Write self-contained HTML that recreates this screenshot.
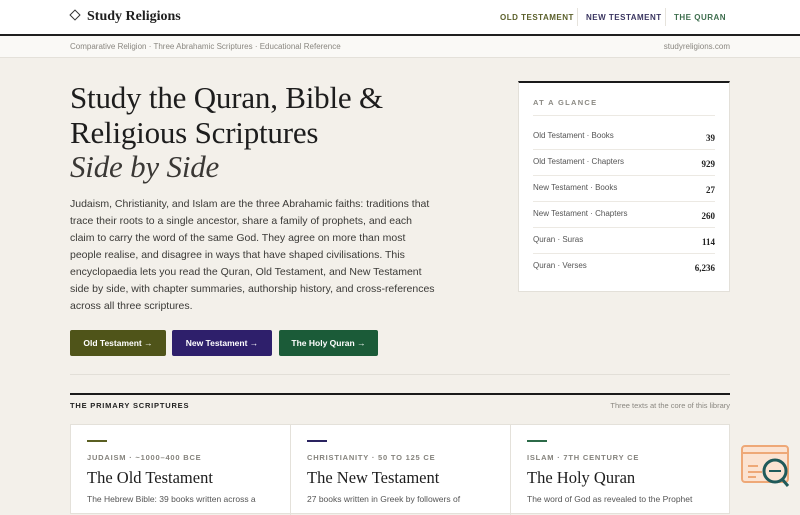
<!DOCTYPE html>
<html><head><meta charset="utf-8"><style>
*{margin:0;padding:0;box-sizing:border-box}
body{width:800px;height:500px;overflow:hidden;background:#f3f0ea;font-family:"Liberation Sans",sans-serif;color:#222;position:relative}
.hdr{position:absolute;left:0;top:0;width:800px;height:36px;background:#fff;border-bottom:2px solid #1f1f1f}
.logo{position:absolute;left:70px;top:9px;font-family:"Liberation Serif",serif;font-weight:bold;font-size:14px;color:#1f1f1f}
.logo .d{display:inline-block;width:8px;height:8px;border:1.3px solid #333;transform:rotate(45deg);margin:0 8px 1px 1px}
.nav{position:absolute;top:13px;font-size:8px;font-weight:bold;letter-spacing:.5px}
.sep{position:absolute;top:8px;width:1px;height:18px;background:#e6e3dc}
.sub{position:absolute;left:0;top:36px;width:800px;height:22px;background:#faf9f6;border-bottom:1px solid #e4e1da;font-size:8px;color:#8a8780}
h1{position:absolute;left:70px;top:81px;font-family:"Liberation Serif",serif;font-weight:normal;font-size:31px;line-height:34.5px;color:#1d1d1d;letter-spacing:-.2px}
h1 i{color:#3a3835}
p.lead{position:absolute;left:70px;top:196px;white-space:nowrap;font-size:10.5px;line-height:17px;color:#3b3a37;letter-spacing:0}
.btn{position:absolute;top:330px;height:26px;border-radius:2px;color:#fff;font-size:8.5px;font-weight:bold;text-align:center;line-height:26px}
.glance{position:absolute;left:518px;top:81px;width:212px;height:211px;background:#fff;border:1px solid #e3e0d9;border-top:2px solid #1a1a1a}
.glance .t{position:absolute;left:14px;top:15px;font-size:7.5px;letter-spacing:1.3px;font-weight:bold;color:#8b8983}
.glance .hl{position:absolute;left:14px;right:14px;top:32px;border-top:1px solid #ece9e3}
.row{position:absolute;left:14px;right:14px;height:26px;border-bottom:1px solid #ece9e3;font-size:8px;color:#555}
.row b{position:absolute;right:0;top:9px;font-family:"Liberation Serif",serif;font-size:9px;color:#222}
.row span{position:absolute;left:0;top:7px}
.hr{position:absolute;left:70px;width:660px}
.cards{position:absolute;left:70px;top:424px;width:660px;height:90px;background:#fff;border:1px solid #e4e1da}
.c{position:absolute;top:0;width:220px;height:90px;border-right:1px solid #e4e1da}
.c .bar{position:absolute;left:16px;top:15px;width:20px;height:2px}
.c .k{position:absolute;left:16px;top:28px;font-size:7.5px;letter-spacing:.8px;color:#85837d;font-weight:bold}
.c .n{position:absolute;left:16px;top:43px;font-family:"Liberation Serif",serif;font-size:16.5px;color:#1d1d1d}
.c .x{position:absolute;left:16px;top:69px;font-size:8.5px;color:#555;white-space:nowrap}
</style></head><body>
<div class="hdr">
<div class="logo"><span class="d"></span>Study Religions</div>
<div class="nav" style="left:500px;color:#5a5f2a">OLD TESTAMENT</div>
<div class="sep" style="left:577px"></div>
<div class="nav" style="left:586px;color:#3a3560">NEW TESTAMENT</div>
<div class="sep" style="left:665px"></div>
<div class="nav" style="left:674px;color:#3e6e4e">THE QURAN</div>
</div>
<div class="sub"><span style="position:absolute;left:70px;top:6px">Comparative Religion · Three Abrahamic Scriptures · Educational Reference</span><span style="position:absolute;right:70px;top:6px">studyreligions.com</span></div>
<h1>Study the Quran, Bible &amp;<br>Religious Scriptures<br><i>Side by Side</i></h1>
<p class="lead">Judaism, Christianity, and Islam are the three Abrahamic faiths: traditions that<br>trace their roots to a single ancestor, share a family of prophets, and each<br>claim to carry the word of the same God. They agree on more than most<br>people realise, and disagree in ways that have shaped civilisations. This<br>encyclopaedia lets you read the Quran, Old Testament, and New Testament<br>side by side, with chapter summaries, authorship history, and cross-references<br>across all three scriptures.</p>
<div class="btn" style="left:70px;width:96px;background:#4f5419">Old Testament →</div>
<div class="btn" style="left:172px;width:100px;background:#2e1f6b">New Testament →</div>
<div class="btn" style="left:279px;width:99px;background:#1b5b38">The Holy Quran →</div>
<div class="glance"><div class="t">AT A GLANCE</div><div class="hl"></div>
<div class="row" style="top:41px"><span>Old Testament · Books</span><b>39</b></div>
<div class="row" style="top:67px"><span>Old Testament · Chapters</span><b>929</b></div>
<div class="row" style="top:93px"><span>New Testament · Books</span><b>27</b></div>
<div class="row" style="top:119px"><span>New Testament · Chapters</span><b>260</b></div>
<div class="row" style="top:145px"><span>Quran · Suras</span><b>114</b></div>
<div class="row" style="top:171px;border:0"><span>Quran · Verses</span><b>6,236</b></div>
</div>
<div class="hr" style="top:374px;border-top:1px solid #e2dfd8"></div>
<div class="hr" style="top:393px;border-top:2px solid #1a1a1a"></div>
<div style="position:absolute;left:70px;top:401px;font-size:7.5px;font-weight:bold;letter-spacing:.8px;color:#222">THE PRIMARY SCRIPTURES</div>
<div style="position:absolute;right:70px;top:401px;font-size:7.5px;color:#8a8780">Three texts at the core of this library</div>
<div class="cards">
<div class="c" style="left:0"><div class="bar" style="background:#5a5f22"></div><div class="k">JUDAISM · ~1000–400 BCE</div><div class="n">The Old Testament</div><div class="x">The Hebrew Bible: 39 books written across a</div></div>
<div class="c" style="left:220px"><div class="bar" style="background:#2a2360"></div><div class="k">CHRISTIANITY · 50 TO 125 CE</div><div class="n">The New Testament</div><div class="x">27 books written in Greek by followers of</div></div>
<div class="c" style="left:440px;border:0"><div class="bar" style="background:#2c6a48"></div><div class="k">ISLAM · 7TH CENTURY CE</div><div class="n">The Holy Quran</div><div class="x">The word of God as revealed to the Prophet</div></div>
</div>
<svg style="position:absolute;left:740px;top:444px" width="52" height="46" viewBox="0 0 52 46"><rect x="2" y="2" width="46" height="36" rx="3" fill="#fbe3d2" stroke="#eea877" stroke-width="2"/><line x1="2" y1="9" x2="48" y2="9" stroke="#eea877" stroke-width="2"/><path d="M8 22h10M8 28h14M8 33h8" stroke="#eea877" stroke-width="2"/><circle cx="35" cy="27" r="11" fill="none" stroke="#1f5a5a" stroke-width="3"/><line x1="29" y1="27" x2="41" y2="27" stroke="#1f5a5a" stroke-width="2"/><line x1="42" y1="35" x2="48" y2="42" stroke="#1f5a5a" stroke-width="3"/></svg>
</body></html>
